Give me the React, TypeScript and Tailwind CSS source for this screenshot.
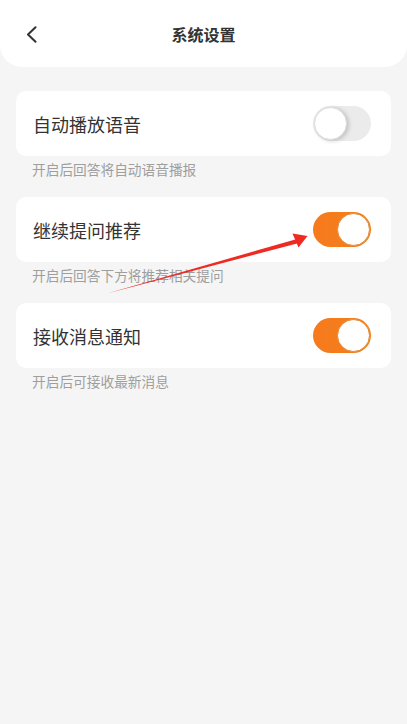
import { useState } from "react"

interface SettingItem {
  title: string
  desc: string
  on: boolean
}

const initialItems: SettingItem[] = [
  { title: "自动播放语音", desc: "开启后回答将自动语音播报", on: false },
  { title: "继续提问推荐", desc: "开启后回答下方将推荐相关提问", on: true },
  { title: "接收消息通知", desc: "开启后可接收最新消息", on: true },
]

function Toggle({ on, onClick }: { on: boolean; onClick: () => void }) {
  return (
    <button
      onClick={onClick}
      className={`flex h-[35px] w-[58px] items-center rounded-full p-[1px] ${
        on ? "justify-end bg-gradient-to-r from-[#f77a1c] to-[#f0801f]" : "justify-start bg-[#ebebeb]"
      }`}
    >
      <span
        className={`block h-[33px] w-[33px] rounded-full bg-white ${
          on ? "border border-[#e08a3a]" : "border border-[#dcdcdc] shadow-[2px_1px_4px_rgba(0,0,0,0.18)]"
        }`}
      />
    </button>
  )
}

export default function App() {
  const [items, setItems] = useState(initialItems)

  const toggle = (index: number) => {
    setItems(items.map((item, i) => (i === index ? { ...item, on: !item.on } : item)))
  }

  return (
    <div
      className="relative min-h-[724px] w-full bg-[#f5f5f5]"
      style={{ fontFamily: '"Noto Sans CJK SC", "Noto Sans", sans-serif' }}
    >
      <header className="relative flex h-[67px] items-center justify-center rounded-b-[22px] bg-white">
        <button className="absolute left-[26px] top-[25px] flex h-[18px] w-[12px] items-center">
          <svg width="11" height="17" viewBox="0 0 11 17" fill="none">
            <path d="M9.5 1.2L2 8.5L9.5 15.8" stroke="#333333" strokeWidth="2" strokeLinecap="round" strokeLinejoin="round" />
          </svg>
        </button>
        <h1 className="text-[16px] font-bold leading-none text-[#333333]">系统设置</h1>
      </header>

      <div className="flex flex-col px-4 pt-[24px]">
        {items.map((item, index) => (
          <div key={index} className="flex flex-col">
            <div className="flex h-[65px] items-center justify-between rounded-[10px] bg-white pl-[17px] pr-[20px]">
              <span className="text-[18px] leading-none text-[#333333]">{item.title}</span>
              <Toggle on={item.on} onClick={() => toggle(index)} />
            </div>
            <p className="mb-[20px] mt-[6px] h-[15px] pl-[16px] text-[13.7px] leading-[15px] text-[#9e9e9e]">{item.desc}</p>
          </div>
        ))}
      </div>

      {/* annotation arrow */}
      <svg className="pointer-events-none absolute left-0 top-0" width="407" height="724" viewBox="0 0 407 724">
        <polygon points="107,293.5 297,239 299,243" fill="#ee2a22" />
        <polygon points="307.5,236 292.5,233.5 298.5,247.5" fill="#ee2a22" />
      </svg>
    </div>
  )
}
